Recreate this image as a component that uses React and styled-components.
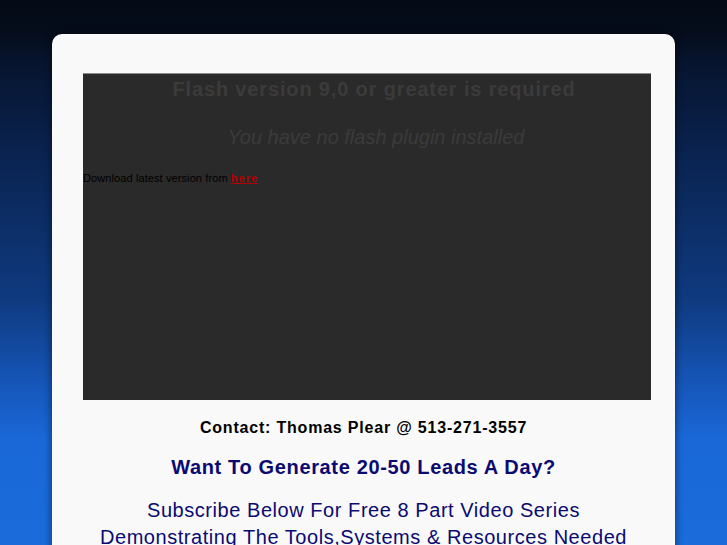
import React from "react";
import styled, { createGlobalStyle } from "styled-components";

const Global = createGlobalStyle`
  html, body { margin: 0; padding: 0; }
  body {
    min-height: 545px;
    font-family: "Liberation Sans", Arial, sans-serif;
    background: linear-gradient(to bottom,
      #040a15 0px, #050c1a 30px, #07142e 60px, #0a2452 160px,
      #0f3a80 300px, #1658bd 390px, #1a68d8 440px, #1b6bdb 545px);
    background-repeat: no-repeat;
    background-color: #1b6bdb;
    overflow: hidden;
  }
`;

const Page = styled.div`
  padding-top: 34px;
  display: flex;
  justify-content: center;
`;

const Card = styled.div`
  width: 623px;
  background: #f9f9f9;
  border-radius: 10px;
  box-shadow: 0 0 6px 2px rgba(0, 0, 0, 0.35);
  padding: 39px 24px 20px 31px;
  box-sizing: border-box;
`;

const FlashBox = styled.div`
  width: 568px;
  height: 327px;
  background: #2a2a2a;
  border-top: 1px solid #8a8a8a;
  box-sizing: border-box;
  padding-top: 2px;
`;

const FlashTitle = styled.div`
  font-weight: bold;
  font-size: 20px;
  letter-spacing: 0.85px;
  color: #3b3b3b;
  text-align: center;
  padding-left: 14px;
  line-height: 26px;
`;

const FlashSub = styled.div`
  font-style: italic;
  font-size: 20px;
  color: #3b3b3b;
  text-align: center;
  padding-left: 18px;
  margin-top: 22px;
  line-height: 26px;
`;

const Download = styled.div`
  font-size: 11px;
  color: #000;
  margin-top: 21px;
  letter-spacing: 0.1px;
  line-height: 14px;
`;

const Link = styled.a`
  color: #b80000;
  font-weight: bold;
  text-decoration: underline;
  letter-spacing: 1px;
`;

const Contact = styled.div`
  font-weight: bold;
  font-size: 16px;
  letter-spacing: 0.8px;
  color: #000;
  text-align: center;
  margin-left: -7px;
  margin-top: 19px;
`;

const Headline = styled.div`
  font-weight: bold;
  font-size: 20px;
  letter-spacing: 0.65px;
  color: #0a0a72;
  text-align: center;
  margin-left: -7px;
  margin-top: 19px;
`;

const Subscribe = styled.div`
  font-size: 20px;
  letter-spacing: 0.55px;
  color: #0a0a72;
  text-align: center;
  margin-left: -7px;
  margin-top: 18px;
  line-height: 27px;
`;

export default function App() {
  return (
    <>
      <Global />
      <Page>
        <Card>
          <FlashBox>
            <FlashTitle>Flash version 9,0 or greater is required</FlashTitle>
            <FlashSub>You have no flash plugin installed</FlashSub>
            <Download>
              Download latest version from <Link href="#">here </Link>
            </Download>
          </FlashBox>
          <Contact>Contact: Thomas Plear @ 513-271-3557</Contact>
          <Headline>Want To Generate 20-50 Leads A Day?</Headline>
          <Subscribe>
            Subscribe Below For Free 8 Part Video Series
            <br />
            Demonstrating The Tools,Systems &amp; Resources Needed
          </Subscribe>
        </Card>
      </Page>
    </>
  );
}
